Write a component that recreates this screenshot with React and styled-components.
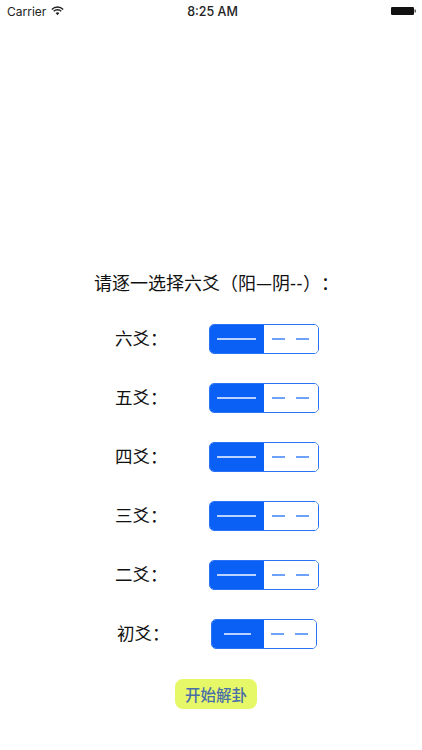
import React from "react";
import styled, { createGlobalStyle } from "styled-components";

const Global = createGlobalStyle`
  html, body { margin: 0; padding: 0; background: #fff; }
  body { font-family: "Noto Sans CJK SC", "Liberation Sans", sans-serif; text-spacing-trim: space-all; }
`;
const Page = styled.div`
  width: 422px; height: 750px; overflow: hidden; background: #fff;
  display: flex; flex-direction: column;
`;
const StatusBar = styled.div`
  height: 22px; display: grid; grid-template-columns: 1fr auto 1fr; align-items: center;
  padding: 0 6px 0 7px; font-family: Inter, "Liberation Sans", sans-serif; font-size: 12px; color: #222;
`;
const Left = styled.div`display: flex; align-items: center; gap: 5px;`;
const Right = styled.div`display: flex; justify-content: flex-end; align-items: center;`;
const Time = styled.div`font-weight: 500; font-size: 12.5px; margin-left: 2px;`;
const Title = styled.div`
  margin-top: 249px; height: 22px; line-height: 22px; text-align: center;
  font-size: 18px; color: #111; white-space: nowrap; padding-left: 11px;
`;
const Dashes = styled.span`font-family: "Liberation Sans", sans-serif; letter-spacing: 0.5px;`;
const Rows = styled.div`margin-top: 31px; display: flex; flex-direction: column; gap: 29px;`;
const Row = styled.div`
  height: 30px; display: flex; align-items: center; padding-left: ${p => p.$wide ? 115 : 117}px;
`;
const Label = styled.div`
  width: 93.6px; font-size: 17.5px; color: #111; white-space: nowrap; line-height: 30px; margin-top: -3px;
`;
const Segment = styled.div`
  width: ${p => p.$w}px; height: 30px; box-sizing: border-box; display: flex; border: 1.5px solid #2a72f5;
  border-radius: 5px; overflow: hidden;
`;
const Yang = styled.div`
  flex: 0 0 ${p => p.$w}px; background: #0a60f5; display: flex; align-items: center; justify-content: center;
`;
const Yin = styled.div`
  flex: 1; background: #fff; display: flex; align-items: center; justify-content: center; gap: 11.5px;
`;
const Solid = styled.span`display: block; width: ${p => p.$w}px; height: 1.5px; background: #b9d2ff;`;
const Dash = styled.span`display: block; width: 13px; height: 1.5px; background: #6ea2f8;`;
const Footer = styled.div`margin-top: 30px; padding-left: 10px; display: flex; justify-content: center;`;
const Start = styled.button`
  width: 82px; height: 30px; border: 0; border-radius: 8px; background: #e6f768; padding: 0;
  font: 500 15.5px "Noto Sans CJK SC", sans-serif; color: #4a6fa8;
`;

const names = ["六爻", "五爻", "四爻", "三爻", "二爻", "初爻"];

export default function App() {
  return (
    <Page>
      <Global />
      <StatusBar>
        <Left>
          <span>Carrier</span>
          <svg width="13" height="10" viewBox="0 0 13 10">
            <path d="M0.8 3.4a8 8 0 0 1 11.4 0" fill="none" stroke="#222" strokeWidth="1.4" />
            <path d="M2.7 5.3a5.3 5.3 0 0 1 7.6 0" fill="none" stroke="#222" strokeWidth="1.4" />
            <path d="M4.6 7.1a2.7 2.7 0 0 1 3.8 0L6.5 9.2z" fill="#222" />
          </svg>
        </Left>
        <Time>8:25 AM</Time>
        <Right>
          <svg width="25" height="10" viewBox="0 0 25 10">
            <rect x="0" y="1" width="23" height="8" rx="1.2" fill="#111" />
            <rect x="23.5" y="3.5" width="1.3" height="3" fill="#444" />
          </svg>
        </Right>
      </StatusBar>
      <Title>请逐一选择六爻（阳—阴<Dashes>--</Dashes>）：</Title>
      <Rows>
        {names.map((n, i) => {
          const last = i === 5;
          return (
            <Row key={n} $wide={!last}>
              <Label>{n}：</Label>
              <Segment $w={last ? 106 : 110}>
                <Yang $w={last ? 52 : 54}><Solid $w={last ? 27 : 39} /></Yang>
                <Yin><Dash /><Dash /></Yin>
              </Segment>
            </Row>
          );
        })}
      </Rows>
      <Footer><Start>开始解卦</Start></Footer>
    </Page>
  );
}
